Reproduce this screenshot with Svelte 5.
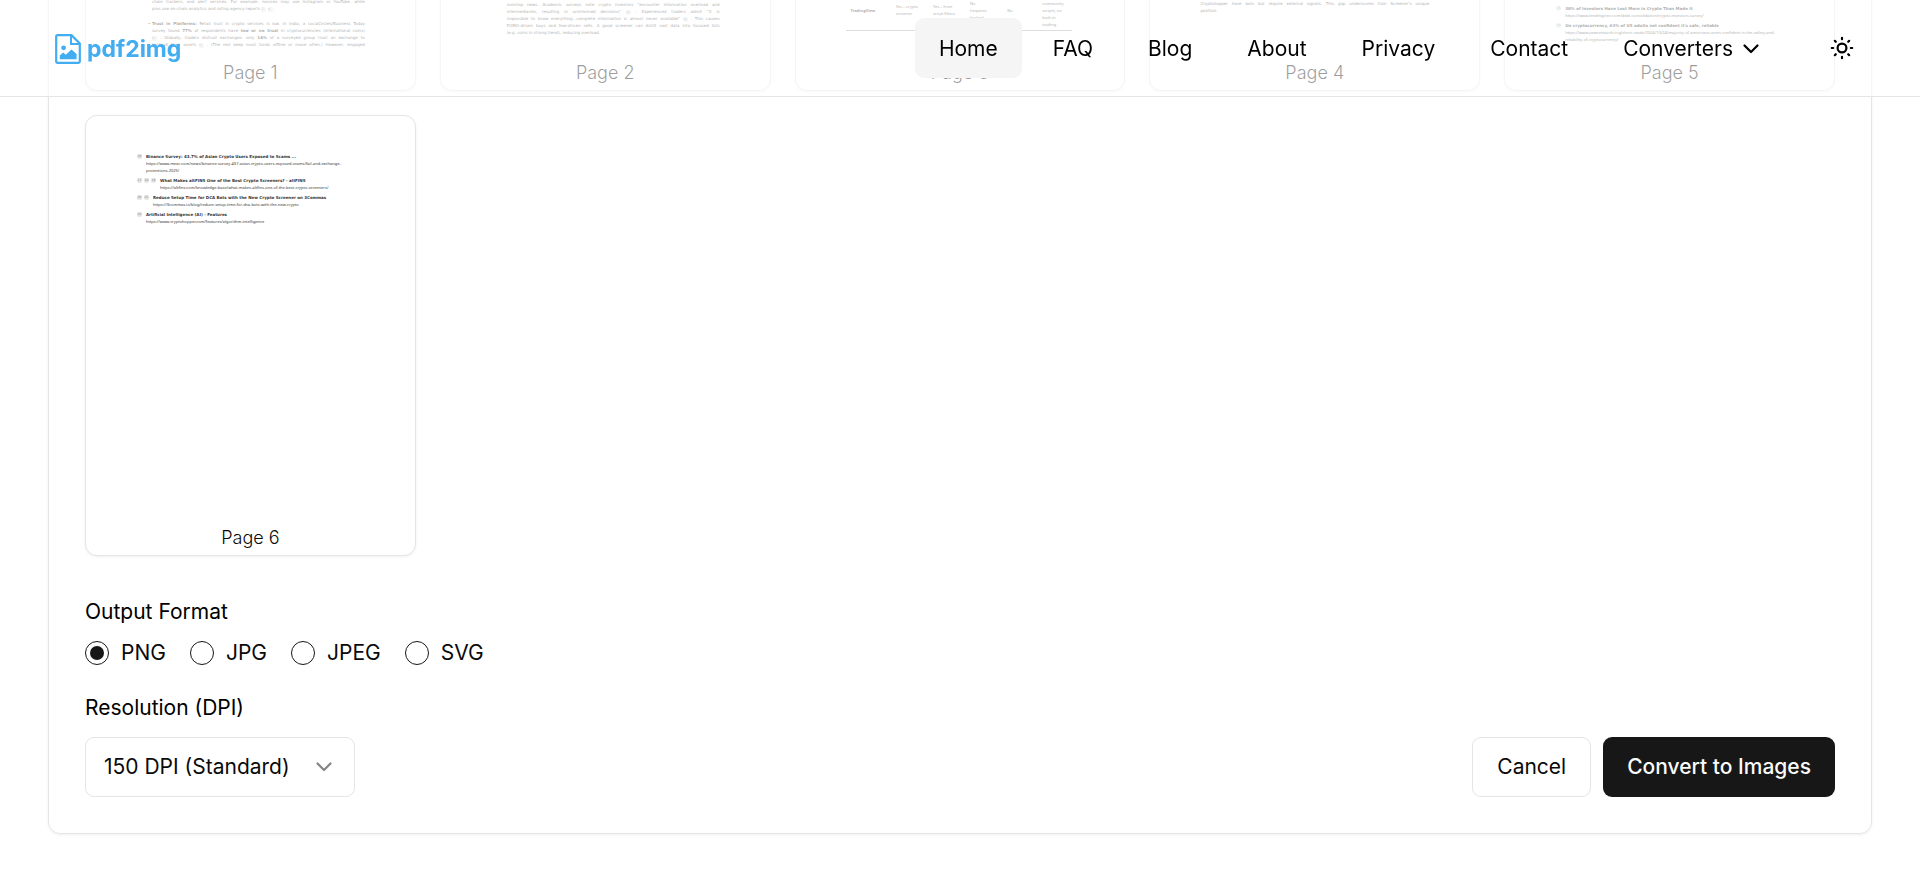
<script lang="ts">
  const links = ["Home", "FAQ", "Blog", "About", "Privacy", "Contact"];
  const formats = ["PNG", "JPG", "JPEG", "SVG"];
  const resolutions = [
    { value: 72, label: "72 DPI (Screen)" },
    { value: 150, label: "150 DPI (Standard)" },
    { value: 300, label: "300 DPI (Print)" },
  ];

  const surveySources = [
    {
      refs: ["15"],
      title: "38% of Investors Have Lost More in Crypto Than Made It",
      url: ["https://www.lendingtree.com/debt-consolidation/crypto-investors-survey/"],
    },
    {
      refs: ["10"],
      title: "On cryptocurrency, 63% of US adults not confident it's safe, reliable",
      url: [
        "https://www.pewresearch.org/short-reads/2024/10/24/majority-of-americans-arent-confident-in-the-safety-and-",
        "reliability-of-cryptocurrency/",
      ],
    },
  ];

  const screenerSources = [
    {
      refs: ["16"],
      title: "Binance Survey: 43.7% of Asian Crypto Users Exposed to Scams ...",
      url: [
        "https://www.mexc.com/news/binance-survey-437-asian-crypto-users-exposed-scams/fail-and-exchange-",
        "protections-2025/",
      ],
    },
    {
      refs: ["17", "18", "19"],
      title: "What Makes altFINS One of the Best Crypto Screeners? - altFINS",
      url: ["https://altfins.com/knowledge-base/what-makes-altfins-one-of-the-best-crypto-screeners/"],
    },
    {
      refs: ["20", "21"],
      title: "Reduce Setup Time for DCA Bots with the New Crypto Screener on 3Commas",
      url: ["https://3commas.io/blog/reduce-setup-time-for-dca-bots-with-the-new-crypto"],
    },
    {
      refs: ["22"],
      title: "Artificial Intelligence (AI) - Features",
      url: ["https://www.cryptohopper.com/features/algorithm-intelligence"],
    },
  ];

  let format = $state("PNG");
  let dpi = $state(150);
</script>

{#snippet sources(items: typeof screenerSources)}
  {#each items as item}
    <div class="source">
      {#each item.refs as ref}<i class="ref">{ref}</i>{/each}
      <div class="source-text">
        <b>{item.title}</b>
        {#each item.url as part}<span>{part}</span>{/each}
      </div>
    </div>
  {/each}
{/snippet}

<div class="page">
  <header>
    <a class="logo" href="#home">
      <svg viewBox="0 0 26 30" width="26" height="30" aria-hidden="true">
        <path d="M2.5 1.2H16.5L24.8 9.5V27.5Q24.8 28.8 23.5 28.8H2.5Q1.2 28.8 1.2 27.5V2.5Q1.2 1.2 2.5 1.2Z" fill="none" stroke="currentColor" stroke-width="2.2" />
        <path d="M16 1.5V10H24.5" fill="none" stroke="currentColor" stroke-width="2" />
        <circle cx="8.6" cy="13.8" r="2.4" fill="currentColor" />
        <path d="M4.8 25.2V21.5L8.2 18.6L10.8 20.8L16.5 15.5L21.6 20V25.2Z" fill="currentColor" />
      </svg>
      <span>pdf2img</span>
    </a>
    <nav>
      {#each links as link}
        <a href="#{link.toLowerCase()}" class:active={link === "Home"}>{link}</a>
      {/each}
      <button class="menu" type="button">
        Converters
        <svg viewBox="0 0 24 24" width="24" height="24" aria-hidden="true"><path d="m5.5 8.5 6.5 6.5 6.5-6.5" /></svg>
      </button>
      <button class="theme" type="button" aria-label="Toggle theme">
        <svg viewBox="0 0 24 24" width="24" height="24" aria-hidden="true">
          <circle cx="12" cy="12" r="4.4" />
          <path d="M12 1.8v1.4M12 20.8v1.4M1.8 12h1.4M20.8 12h1.4M4.8 4.8l1 1M18.2 18.2l1 1M4.8 19.2l1-1M18.2 5.8l1-1" />
        </svg>
      </button>
    </nav>
  </header>

  <main>
    <section class="panel">
      <div class="sheets">
        <figure>
          <div class="sheet trust">
            <p>
              <span>chain trackers, and alert services. For example, novices may use Instagram or YouTube, while</span>
              <span class="last">pros use on-chain analytics and rating-agency reports <i class="ref">7</i> <i class="ref">8</i> .</span>
            </p>
            <p class="item">
              <span><b>Trust in Platforms:</b> Retail trust in crypto services is low. In India, a LocalCircles/Business Today</span>
              <span>survey found <b>77%</b> of respondents have <b>low or no trust</b> in cryptocurrencies (international coins)</span>
              <span><i class="ref">9</i> . Globally, traders distrust exchanges: only <b>16%</b> of a surveyed group trust an exchange to</span>
              <span>hold all their assets <i class="ref">9</i> . (The rest keep most funds offline or move often.) However, engaged</span>
            </p>
          </div>
          <figcaption>Page 1</figcaption>
        </figure>
        <figure>
          <div class="sheet overload">
            <p>
              <span>nonstop news. Academic surveys note crypto investors “encounter information overload and</span>
              <span>intermediaries, resulting in uninformed decisions” <i class="ref">11</i> . Experienced traders admit “it is</span>
              <span>impossible to know everything...complete information is almost never available” <i class="ref">11</i> . This causes</span>
              <span>FOMO-driven buys and fear-driven sells. A good screener can distill vast data into focused lists</span>
              <span class="last">(e.g. coins in strong trend), reducing overload.</span>
            </p>
          </div>
          <figcaption>Page 2</figcaption>
        </figure>
        <figure>
          <div class="sheet compare">
            <table>
              <tbody>
                <tr>
                  <th>TradingView</th>
                  <td>Yes – crypto<br />screener</td>
                  <td>Yes – from<br />script filters</td>
                  <td>No<br />(requires<br />broker)</td>
                  <td>No</td>
                  <td>Strong<br />community<br />scripts; no<br />built-in<br />trading.</td>
                </tr>
              </tbody>
            </table>
          </div>
          <figcaption>Page 3</figcaption>
        </figure>
        <figure>
          <div class="sheet gap">
            <p>
              <span>Cryptohopper have bots but require external signals. This gap underscores Coin Screener’s unique</span>
              <span class="last">position.</span>
            </p>
          </div>
          <figcaption>Page 4</figcaption>
        </figure>
        <figure>
          <div class="sheet surveys">{@render sources(surveySources)}</div>
          <figcaption>Page 5</figcaption>
        </figure>
        <figure>
          <div class="sheet screeners">{@render sources(screenerSources)}</div>
          <figcaption>Page 6</figcaption>
        </figure>
      </div>

      <fieldset>
        <legend>Output Format</legend>
        <div class="formats">
          {#each formats as name}
            <label>
              <input type="radio" name="format" value={name} bind:group={format} />
              {name}
            </label>
          {/each}
        </div>
      </fieldset>

      <div class="bottom">
        <div class="resolution">
          <label for="dpi">Resolution (DPI)</label>
          <div class="select">
            <select id="dpi" bind:value={dpi}>
              {#each resolutions as r}
                <option value={r.value}>{r.label}</option>
              {/each}
            </select>
            <svg viewBox="0 0 24 24" width="24" height="24" aria-hidden="true"><path d="m5.5 8.5 6.5 6.5 6.5-6.5" /></svg>
          </div>
        </div>
        <div class="actions">
          <button class="outline" type="button">Cancel</button>
          <button class="primary" type="button">Convert to Images</button>
        </div>
      </div>
    </section>
  </main>
</div>

<style>
  :global(body) {
    margin: 0;
    background: #fff;
  }
  .page {
    --fg: #0a0a0a;
    --border: #e5e5e5;
    /* reversed column keeps the scroll position at the options below the sheets */
    display: flex;
    flex-direction: column-reverse;
    height: 100vh;
    overflow-y: auto;
    scrollbar-width: none;
    color: var(--fg);
    font: 400 21px/30px Inter, sans-serif;
  }
  .page *,
  .page *::before {
    box-sizing: border-box;
  }
  button,
  select,
  input {
    margin: 0;
    color: inherit;
    font: inherit;
  }
  svg {
    flex: none;
  }

  header {
    position: fixed;
    inset: 0 0 auto;
    z-index: 10;
    display: flex;
    align-items: center;
    justify-content: space-between;
    height: 97px;
    padding: 0 48px;
    border-bottom: 1px solid var(--border);
    background: rgba(255, 255, 255, 0.6);
  }
  .logo {
    display: flex;
    align-items: center;
    gap: 6px;
    padding: 2px 0 0 7px;
    color: #42adf0;
    font-size: 23px;
    font-weight: 700;
    text-decoration: none;
  }
  nav {
    display: flex;
    gap: 7px;
  }
  nav a,
  nav button {
    display: flex;
    align-items: center;
    gap: 6px;
    height: 60px;
    padding: 2px 24px 0;
    border: 0;
    border-radius: 9px;
    background: none;
    color: #000;
    text-decoration: none;
    cursor: pointer;
  }
  nav a.active {
    background: #f5f5f5;
  }
  nav svg,
  .select svg {
    fill: none;
    stroke: currentColor;
    stroke-width: 2.2;
    stroke-linecap: round;
    stroke-linejoin: round;
  }
  nav .theme {
    justify-content: center;
    width: 60px;
    margin-left: 18px;
    padding: 0;
  }

  main {
    flex: none;
    padding: 46px 48px;
  }
  .panel {
    padding: 36px;
    border: 1px solid var(--border);
    border-radius: 12px;
    box-shadow: 0 1px 3px rgba(0, 0, 0, 0.06);
  }

  .sheets {
    display: grid;
    grid-template-columns: repeat(5, 1fr);
    gap: 24px;
    margin-bottom: 45px;
  }
  figure {
    position: relative;
    aspect-ratio: 3 / 4;
    margin: 0;
    border: 1px solid var(--border);
    border-radius: 12px;
    background: #fff;
    box-shadow: 0 1px 3px rgba(0, 0, 0, 0.06);
    overflow: hidden;
  }
  figcaption {
    position: absolute;
    inset: auto 0 5px;
    font-size: 18px;
    font-weight: 300;
    line-height: 24px;
    text-align: center;
  }
  .sheet {
    display: flex;
    flex-direction: column;
    justify-content: flex-end;
    height: 100%;
    padding: 0 50px;
    color: #333;
    font: 4px/7px "DejaVu Sans", sans-serif;
  }
  .sheet p {
    margin: 0 0 8px;
  }
  .sheet p:last-child {
    margin: 0;
  }
  .sheet p span {
    display: block;
    text-align-last: justify;
    white-space: nowrap;
  }
  .sheet p .last {
    text-align-last: left;
  }
  .sheet .item {
    position: relative;
  }
  .sheet .item::before {
    content: "•";
    position: absolute;
    left: -4px;
  }
  .ref {
    display: inline-block;
    width: 5px;
    border-radius: 2px;
    background: #e5e5e5;
    color: #888;
    font-size: 3px;
    font-style: normal;
    line-height: 5px;
    text-align: center;
  }
  .trust {
    padding-left: 66px;
    padding-bottom: 42px;
  }
  .overload {
    padding-left: 66px;
    padding-bottom: 54px;
  }
  .compare {
    padding-right: 52px;
    padding-bottom: 59px;
  }
  .gap {
    padding-bottom: 76px;
  }
  .surveys {
    padding-bottom: 47px;
  }
  .screeners {
    justify-content: flex-start;
    padding-top: 37px;
  }
  .compare table {
    width: 100%;
    border-bottom: 1px solid #aaa;
    border-collapse: collapse;
    font-family: "Noto Sans", sans-serif;
    table-layout: fixed;
  }
  .compare th,
  .compare td {
    width: 37px;
    padding: 0 0 2px 2px;
    text-align: left;
    vertical-align: middle;
  }
  .compare th {
    width: 48px;
    padding-left: 5px;
  }
  .compare td:nth-child(5) {
    width: 35px;
  }
  .compare td:last-child {
    width: 32px;
  }
  .source {
    display: flex;
    gap: 2px;
    margin-bottom: 3px;
    padding-left: 1px;
  }
  .source:last-child {
    margin-bottom: 0;
  }
  .source .ref {
    align-self: flex-start;
    margin-top: 1px;
  }
  .source-text {
    padding-left: 2px;
    white-space: nowrap;
  }
  .source-text b,
  .source-text span {
    display: block;
  }
  .source-text span {
    font-family: "Noto Sans", sans-serif;
  }

  fieldset {
    margin: 0 0 32px;
    padding: 0;
    border: 0;
  }
  legend,
  .resolution label {
    display: block;
    margin-bottom: 19px;
    padding: 0;
    color: #000;
    line-height: 21px;
  }
  .formats {
    display: flex;
    gap: 24px;
  }
  .formats label {
    display: flex;
    align-items: center;
    gap: 12px;
    line-height: 24px;
  }
  .formats input {
    display: grid;
    place-items: center;
    width: 24px;
    height: 24px;
    border: 1px solid #171717;
    border-radius: 50%;
    appearance: none;
  }
  .formats input:checked::before {
    content: "";
    width: 14px;
    height: 14px;
    border-radius: 50%;
    background: #171717;
  }

  .bottom {
    display: flex;
    align-items: flex-end;
    justify-content: space-between;
  }
  .select {
    display: grid;
    align-items: center;
    width: 270px;
  }
  .select select,
  .select svg {
    grid-area: 1 / 1;
  }
  .select select {
    height: 60px;
    padding: 0 18px;
    border: 1px solid var(--border);
    border-radius: 9px;
    background: #fff;
    appearance: none;
  }
  .select svg {
    justify-self: end;
    margin-right: 19px;
    color: #858585;
    pointer-events: none;
  }
  .actions {
    display: flex;
    gap: 12px;
  }
  .actions button {
    height: 60px;
    padding: 0 24px;
    border: 0;
    border-radius: 9px;
    cursor: pointer;
  }
  .actions .outline {
    border: 1px solid var(--border);
    background: #fff;
  }
  .actions .primary {
    background: #171717;
    color: #fafafa;
    font-weight: 500;
  }
</style>
